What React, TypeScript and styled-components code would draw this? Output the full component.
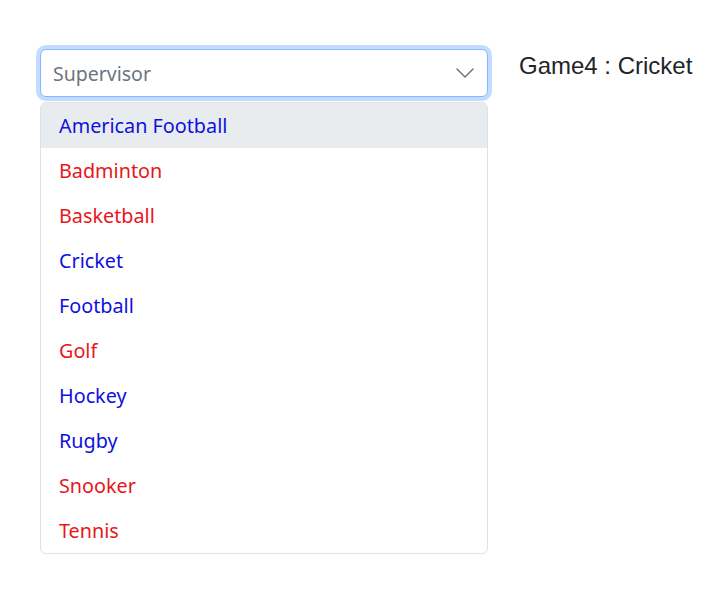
import styled, { createGlobalStyle } from 'styled-components'

const GlobalStyle = createGlobalStyle`
    body {
        margin: 0;
        background: #ffffff;
        font-family: "Noto Sans", "Open Sans", sans-serif;
    }
`

const Page = styled.div`
    display: flex;
    align-items: flex-start;
    gap: 31px;
    padding: 49px 0 0 40px;
`

const SelectWrap = styled.div`
    display: flex;
    flex-direction: column;
    gap: 5px;
    width: 448px;
`

const SelectBox = styled.div`
    display: flex;
    align-items: center;
    justify-content: space-between;
    height: 48px;
    box-sizing: border-box;
    padding: 0 13px 0 12px;
    border: 1px solid #86b7fe;
    border-radius: 6px;
    box-shadow: 0 0 0 4px rgba(13, 110, 253, 0.25);
    background: #fff;
`

const Placeholder = styled.span`
    font-size: 19.5px;
    color: #6c757d;
`

const Menu = styled.ul`
    list-style: none;
    margin: 0;
    padding: 0;
    border: 1px solid #dee2e6;
    border-radius: 6px;
    background: #fff;
    overflow: hidden;
`

const Option = styled.li<{ $color: string; $active?: boolean }>`
    height: 45px;
    display: flex;
    align-items: center;
    padding-left: 18px;
    font-size: 19.8px;
    color: ${p => p.$color};
    background: ${p => (p.$active ? '#e9ecef' : 'transparent')};
`

const Label = styled.div`
    font-family: "Liberation Sans", Arial, sans-serif;
    font-size: 24px;
    color: #212529;
    padding-top: 3px;
`

const BLUE = '#1010e0'
const RED = '#e8161b'

const games = [
    { name: 'American Football', color: BLUE },
    { name: 'Badminton', color: RED },
    { name: 'Basketball', color: RED },
    { name: 'Cricket', color: BLUE },
    { name: 'Football', color: BLUE },
    { name: 'Golf', color: RED },
    { name: 'Hockey', color: BLUE },
    { name: 'Rugby', color: BLUE },
    { name: 'Snooker', color: RED },
    { name: 'Tennis', color: RED },
]

const Chevron = () => (
    <svg width="18" height="12" viewBox="0 0 18 12" fill="none">
        <path d="M1 2l8 8 8-8" stroke="#6c757d" strokeWidth="1.5" strokeLinecap="round" strokeLinejoin="round" />
    </svg>
)

const App = () => {
    return (
        <>
            <GlobalStyle />
            <Page>
                <SelectWrap>
                    <SelectBox>
                        <Placeholder>Supervisor</Placeholder>
                        <Chevron />
                    </SelectBox>
                    <Menu>
                        {games.map((g, i) => (
                            <Option key={g.name} $color={g.color} $active={i === 0}>{g.name}</Option>
                        ))}
                    </Menu>
                </SelectWrap>
                <Label>Game4 : Cricket</Label>
            </Page>
        </>
    )
}

export default App
